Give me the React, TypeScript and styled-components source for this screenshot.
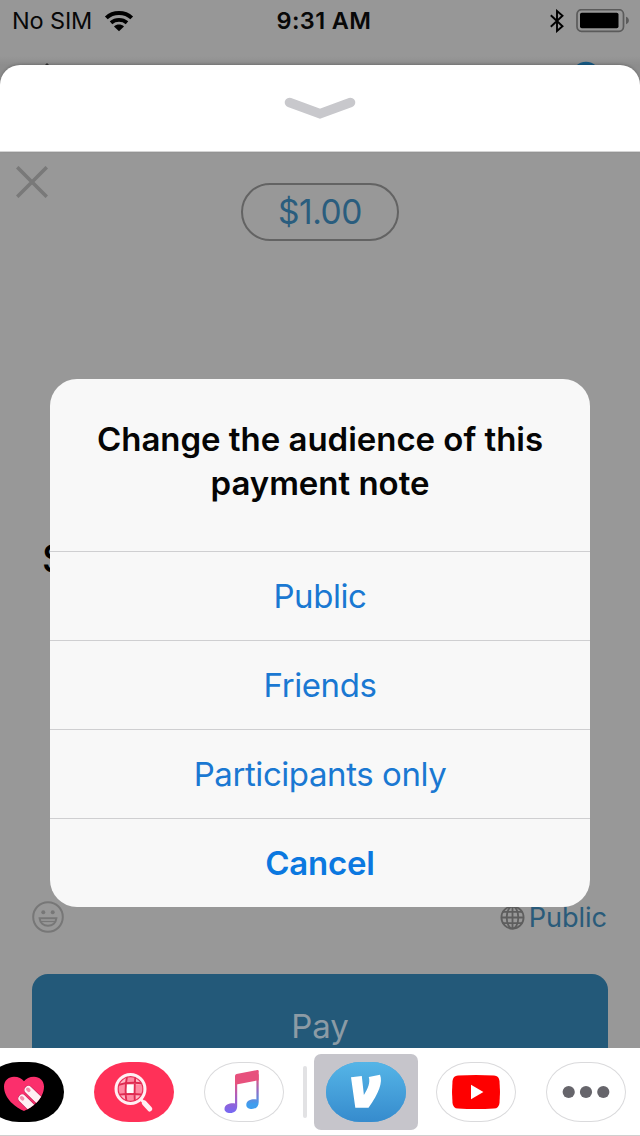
import React from "react";
import styled, { createGlobalStyle } from "styled-components";

const GlobalStyle = createGlobalStyle`
  * { box-sizing: border-box; }
  body { margin: 0; font-family: Inter, "Liberation Sans", sans-serif; }
  button { font-family: inherit; border: 0; padding: 0; background: none; }
  svg { display: block; flex: none; }
`;

const Screen = styled.main`
  position: relative;
  width: 640px;
  height: 1136px;
  overflow: hidden;
  display: flex;
  flex-direction: column;
  background: #979797;
`;

const StatusBar = styled.header`
  height: 65px;
  flex: none;
  display: grid;
  grid-template-columns: 1fr auto 1fr;
  align-items: start;
  padding: 0 11px 0 12px;
  background: linear-gradient(#979797 56px, #8d8d8d 65px);
`;

const StatusGroup = styled.div<{ $end?: boolean }>`
  display: flex;
  align-items: center;
  justify-content: ${(p) => (p.$end ? "flex-end" : "flex-start")};
  gap: 12px;
  height: 41px;
`;

const StatusText = styled.span<{ $bold?: boolean }>`
  font-size: 23.5px;
  line-height: 41px;
  font-weight: ${(p) => (p.$bold ? 600 : 400)};
  letter-spacing: ${(p) => (p.$bold ? "0.4px" : "-0.15px")};
  margin-left: ${(p) => (p.$bold ? "7px" : "0")};
  color: #080808;
`;

const Peek = styled.svg`
  position: absolute;
  top: 60px;
  left: 0;
`;

const Grabber = styled.div`
  position: relative;
  height: 87px;
  flex: none;
  display: flex;
  justify-content: center;
  padding-top: 31px;
  background: #fff;
  border-radius: 20px 20px 0 0;
  border-bottom: 1px solid #d4d4d4;
  box-shadow: 0 -1px 3px rgba(0, 0, 0, 0.2);
`;

const GrabberBack = styled.div`
  background: #8d8d8d;
  flex: none;
`;

const Compose = styled.section`
  flex: 1;
  min-height: 0;
  display: flex;
  flex-direction: column;
  padding: 0 32px;
  background: #989898;
`;

const AmountRow = styled.div`
  display: grid;
  grid-template-columns: 1fr 158px 1fr;
  align-items: start;
  margin: 0 -16px;
  padding-top: 14px;
`;

const Amount = styled.div`
  height: 58px;
  margin-top: 17px;
  border: 2px solid #636363;
  border-radius: 29px;
  text-align: center;
  font-size: 33.5px;
  line-height: 55px;
  letter-spacing: -0.45px;
  color: #2a5d7e;
`;

const Note = styled.p`
  flex: 1;
  margin: 0;
  padding: 293px 0 0 10px;
  font-size: 38px;
  line-height: 48px;
  font-weight: 500;
  color: #000;
`;

const OptionsRow = styled.div`
  display: flex;
  justify-content: space-between;
  align-items: center;
  height: 34px;
  margin-bottom: 40px;
`;

const Audience = styled.div`
  display: flex;
  align-items: center;
  gap: 4px;
  margin-right: 1px;
  font-size: 27.2px;
  line-height: 34px;
  letter-spacing: -0.1px;
  color: #2a5b7a;
`;

const AudienceLabel = styled.span`
  padding-top: 2px;
`;

const PayButton = styled.button`
  height: 74px;
  flex: none;
  padding-top: 30px;
  border-radius: 16px 16px 0 0;
  background: #235979;
  color: #8c9ba5;
  font-size: 33px;
  line-height: 44px;
`;

const Drawer = styled.nav`
  height: 88px;
  flex: none;
  display: flex;
  align-items: center;
  padding-top: 1px;
  background: #fff;
  border-bottom: 1px solid #cfcfcf;
`;

const AppPill = styled.div<{ $bg?: string; $after?: number; $before?: number }>`
  width: 80px;
  height: 60px;
  flex: none;
  margin-left: ${(p) => p.$before ?? 0}px;
  margin-right: ${(p) => p.$after ?? 0}px;
  border-radius: 35px / 30px;
  background: ${(p) => p.$bg ?? "#fff"};
  box-shadow: ${(p) => (p.$bg ? "none" : "inset 0 0 0 1px #dadadc")};
  overflow: hidden;
`;

const Divider = styled.div`
  width: 4px;
  height: 52px;
  flex: none;
  margin: 0 7px 0 19px;
  border-radius: 2px;
  background: #e2e2e4;
`;

const Selected = styled.div`
  width: 104px;
  height: 76px;
  flex: none;
  margin-right: 18px;
  display: grid;
  place-items: center;
  border-radius: 7px;
  background: #c6c5cb;
`;

const Dialog = styled.div`
  position: absolute;
  top: 379px;
  left: 50px;
  width: 540px;
  height: 528px;
  border-radius: 27px;
  overflow: hidden;
  background: #f8f8f8;
  text-align: center;
`;

const DialogTitle = styled.h1`
  margin: 0;
  height: 172px;
  padding-top: 38px;
  font-size: 33px;
  line-height: 44px;
  font-weight: 600;
  letter-spacing: -0.03px;
  color: #050505;
`;

const Choice = styled.button<{ $bold?: boolean }>`
  display: block;
  width: 100%;
  height: 89px;
  border-top: 1px solid #cfcfd1;
  font-size: 33px;
  line-height: 88px;
  font-weight: ${(p) => (p.$bold ? 600 : 400)};
  letter-spacing: ${(p) => (p.$bold ? "-0.2px" : "-0.43px")};
  color: ${(p) => (p.$bold ? "#0b78e0" : "#1a78d2")};
`;

const WifiIcon = () => (
  <svg width="30" height="22" viewBox="0 0 30 22" fill="none" stroke="#000" strokeWidth="4">
    <path d="M2.3 7.9C9.2 1.4 20.8 1.4 27.7 7.9" />
    <path d="M7 12.8C11.5 8.9 18.5 8.9 23 12.8" strokeWidth="3.8" />
    <path d="M10 16.4C12.8 13.8 17.2 13.8 20 16.4L15 21.2Z" fill="#000" stroke="none" />
  </svg>
);

const BluetoothIcon = () => (
  <svg width="14" height="24" viewBox="0 0 14 24" fill="none" stroke="#000" strokeWidth="1.9">
    <path d="M.8 6.3L12.5 17.2L7 22V2L12.5 6.8L.8 17.7" />
  </svg>
);

const BatteryIcon = () => (
  <svg width="53" height="24" viewBox="0 0 53 24">
    <rect x="1" y="0.7" width="46.5" height="21.6" rx="4.5" fill="none" stroke="#5b5b5b" strokeWidth="1.7" />
    <rect x="4" y="3.8" width="38.5" height="15.4" rx="1.8" />
    <path d="M50 7.8C53.8 8.9 53.8 14.1 50 15.2Z" fill="#5b5b5b" />
  </svg>
);

const GlobeIcon = () => (
  <svg width="25" height="25" viewBox="0 0 25 25" fill="none" stroke="#5e5e5e" strokeWidth="1.8">
    <circle cx="12.5" cy="12.5" r="11.1" />
    <ellipse cx="12.5" cy="12.5" rx="5.8" ry="11.1" />
    <path d="M12.5 1V24M1 12.5H24M2.7 6.8H22.3M2.7 18.2H22.3" />
  </svg>
);

const SmileIcon = () => (
  <svg width="32" height="32" viewBox="0 0 32 32" fill="none" stroke="#777" strokeWidth="2">
    <circle cx="16" cy="16" r="14.8" />
    <path d="M7.6 17.2H24.4C24 21.8 20.5 24.7 16 24.7S8 21.8 7.6 17.2Z" />
    <path d="M9 20.5H23" strokeWidth="1.3" />
    <circle cx="11.3" cy="11.3" r="2" fill="#777" stroke="none" />
    <circle cx="20.7" cy="11.3" r="2" fill="#777" stroke="none" />
  </svg>
);

const heart =
  "M40 49C32 45.5 20 37 20 24.5C20 18.5 24.5 14.7 30 14.7C34.5 14.7 38 16.5 40 19.2C42 16.5 45.5 14.7 50 14.7C55.5 14.7 60 18.5 60 24.5C60 37 48 45.5 40 49Z";

const HeartArt = () => (
  <svg width="80" height="60" viewBox="0 0 80 60">
    <clipPath id="heartClip"><path d={heart} /></clipPath>
    <path d={heart} fill="#fb2f6c" />
    <g clipPath="url(#heartClip)" strokeLinecap="round">
      <path d="M44.5 28L62 45M38.3 36.5L54 52" stroke="#c42358" strokeWidth="9" />
      <path d="M44.5 28L62 45M38.3 36.5L54 52" stroke="#fff0f4" strokeWidth="7.8" />
      <path d="M43.8 27.3L44.8 28.3M37.6 35.8L38.6 36.8" stroke="#f38bab" strokeWidth="3.6" />
    </g>
  </svg>
);

const ImagesArt = () => (
  <svg width="80" height="60" viewBox="0 0 80 60" fill="none">
    <clipPath id="lensClip"><circle cx="36.5" cy="27" r="13" /></clipPath>
    <g clipPath="url(#lensClip)">
      <rect x="22" y="13" width="30" height="30" fill="#ff8ba3" />
      <path d="M32 22.5H40V32.5H32Z" fill="#fff" />
      <path d="M22 13H32V22.5H22ZM40 13H52V22.5H40ZM22 32.5H32V43H22ZM40 32.5H52V43H40Z" fill="#ffb6c5" />
      <path d="M33.5 12Q30 27 33 43M41.5 12Q40 27 41 43M22 23.5Q36 19 52 22M22 33Q36 31 52 33" stroke="#df2c52" strokeWidth="1.9" />
      <circle cx="36.5" cy="27" r="12.4" stroke="#e8325a" strokeWidth="1.3" />
    </g>
    <circle cx="36.5" cy="27" r="14.5" stroke="#fff0f3" strokeWidth="3" />
    <path d="M47.2 37.7L50 40.5" stroke="#fff0f3" strokeWidth="3" />
    <path d="M50.3 41L55.8 47" stroke="#fff0f3" strokeWidth="5" strokeLinecap="round" />
  </svg>
);

const MusicArt = () => (
  <svg width="80" height="60" viewBox="0 0 80 60">
    <defs>
      <linearGradient id="stemL" x1="0" y1="12" x2="0" y2="50" gradientUnits="userSpaceOnUse">
        <stop offset="0.2" stopColor="#e8547f" /><stop offset="0.6" stopColor="#a95fc0" /><stop offset="1" stopColor="#7768f2" />
      </linearGradient>
      <linearGradient id="stemR" x1="0" y1="8" x2="0" y2="46" gradientUnits="userSpaceOnUse">
        <stop offset="0.2" stopColor="#e8547f" /><stop offset="0.55" stopColor="#916cc4" /><stop offset="0.9" stopColor="#3f9dee" />
      </linearGradient>
    </defs>
    <path d="M31 14V41.5C27 40.8 20.5 42 20.5 47C20.5 49.5 23 51 26 51C30.5 51 33.2 48.5 33.2 44V20H31Z" fill="url(#stemL)" />
    <path d="M52.4 14V37.5C48 36.8 42.3 38.3 42.3 43C42.3 45.6 45 47 47.8 47C52 47 54.7 44.5 54.7 40V12Z" fill="url(#stemR)" />
    <path d="M31 14Q31 12.5 32.5 12.1L53.4 8Q54.7 7.8 54.7 9.2V18.2L31 22.8Z" fill="#e7517d" />
  </svg>
);

const VenmoArt = () => (
  <svg width="80" height="60" viewBox="0 0 80 60">
    <defs>
      <linearGradient id="venmo" x1="0" y1="0" x2="0" y2="1">
        <stop stopColor="#55b5e7" /><stop offset="1" stopColor="#368bcd" />
      </linearGradient>
    </defs>
    <rect width="80" height="60" fill="url(#venmo)" />
    <path d="M25 15.3L35.8 14L37.9 33C42 26.5 44.4 20.5 42.8 15L54 12.7C57 20 53 31 42.5 45.7H29.3Z" fill="#fff" />
  </svg>
);

const YouTubeArt = () => (
  <svg width="80" height="60" viewBox="0 0 80 60">
    <path d="M22 13.4Q40 12.4 58 13.4Q63 13.7 63.5 19Q64.5 30 63.5 41Q63 46.3 58 46.6Q40 47.6 22 46.6Q17 46.3 16.5 41Q15.5 30 16.5 19Q17 13.7 22 13.4Z" fill="#fe0000" />
    <path d="M35 22.8L47.4 30L35 37.2Z" fill="#fff" />
  </svg>
);

const MoreArt = () => (
  <svg width="80" height="60" viewBox="0 0 80 60" fill="#66656b">
    <circle cx="22.7" cy="30" r="6.1" />
    <circle cx="40" cy="30" r="6.1" />
    <circle cx="57.3" cy="30" r="6.1" />
  </svg>
);

export default function App() {
  return (
    <>
      <GlobalStyle />
      <Screen>
        <StatusBar>
          <StatusGroup>
            <StatusText>No SIM</StatusText>
            <WifiIcon />
          </StatusGroup>
          <StatusText $bold>9:31 AM</StatusText>
          <StatusGroup $end>
            <BluetoothIcon />
            <BatteryIcon />
          </StatusGroup>
        </StatusBar>
        <Peek width="640" height="24" viewBox="0 0 640 24">
          <circle cx="586" cy="15.7" r="14" fill="#175b86" />
          <path d="M45 5L47 3L49 5Z" fill="#333" />
        </Peek>
        <GrabberBack>
          <Grabber>
            <svg width="72" height="24" viewBox="0 0 72 24" fill="none" stroke="#c8c8cc" strokeWidth="9.5" strokeLinecap="round">
              <path d="M5.5 6.5L36 17.7L66.5 6.5" />
            </svg>
          </Grabber>
        </GrabberBack>
        <Compose>
          <AmountRow>
            <svg width="32" height="32" viewBox="0 0 32 32" stroke="#797979" strokeWidth="3.6">
              <path d="M1.2 1.2L30.8 30.8M30.8 1.2L1.2 30.8" />
            </svg>
            <Amount>$1.00</Amount>
          </AmountRow>
          <Note>S</Note>
          <OptionsRow>
            <SmileIcon />
            <Audience>
              <GlobeIcon />
              <AudienceLabel>Public</AudienceLabel>
            </Audience>
          </OptionsRow>
          <PayButton>Pay</PayButton>
        </Compose>
        <Drawer>
          <AppPill $bg="#000" $before={-16} $after={30}><HeartArt /></AppPill>
          <AppPill $bg="#ff3158" $after={30}><ImagesArt /></AppPill>
          <AppPill><MusicArt /></AppPill>
          <Divider />
          <Selected>
            <AppPill $bg="#43a0da"><VenmoArt /></AppPill>
          </Selected>
          <AppPill $after={30}><YouTubeArt /></AppPill>
          <AppPill><MoreArt /></AppPill>
        </Drawer>
        <Dialog role="dialog">
          <DialogTitle>Change the audience of this<br />payment note</DialogTitle>
          <Choice>Public</Choice>
          <Choice>Friends</Choice>
          <Choice>Participants only</Choice>
          <Choice $bold>Cancel</Choice>
        </Dialog>
      </Screen>
    </>
  );
}
